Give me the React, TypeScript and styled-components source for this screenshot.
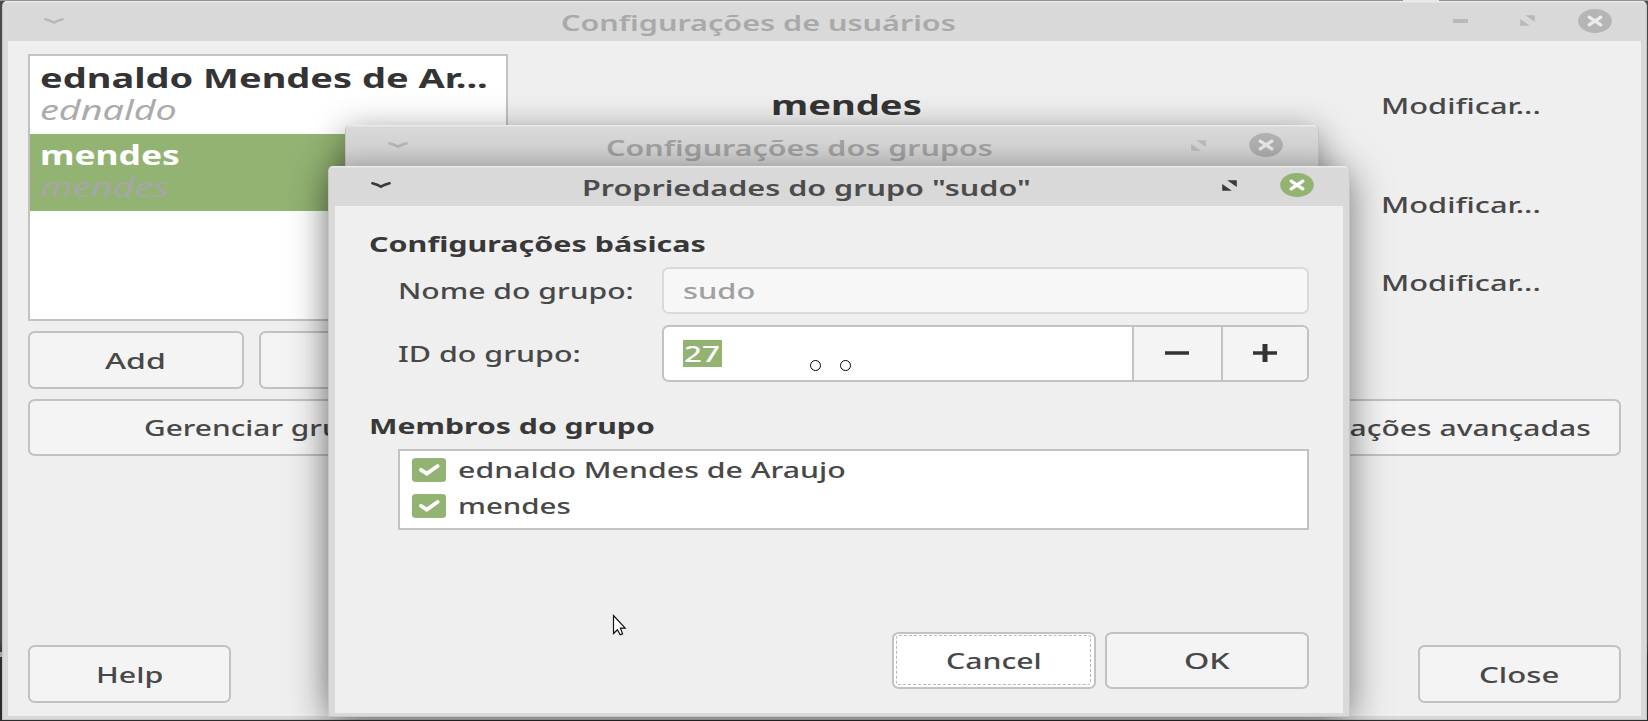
import React, { useLayoutEffect, useRef, useState } from 'react';
import styled, { createGlobalStyle, css } from 'styled-components';

const green = '#92b372';
const line = '#c2c2c2';

const Global = createGlobalStyle`
  * { box-sizing: border-box; }
  html, body { margin: 0; padding: 0; overflow: hidden; }
  body { font-family: "Noto Sans", "Open Sans", sans-serif; color: #484848; }
`;

/* ---------- text fitted to a given width ---------- */

type Look = { $size?: number; $weight?: number; $italic?: boolean; $color?: string; $lh?: number };

const TextBox = styled.span<Look>`
  display: block;
  flex: none;
  white-space: nowrap;
  text-align: left;
  font-size: ${p => p.$size ?? 21.3}px;
  font-weight: ${p => p.$weight ?? 500};
  font-style: ${p => (p.$italic ? 'italic' : 'normal')};
  line-height: ${p => p.$lh ?? 30}px;
  color: ${p => p.$color ?? 'inherit'};
`;
const TextInk = styled.span`
  display: inline-block;
  vertical-align: top;
  margin-left: -1px;
  transform-origin: 0 0;
`;

function Label({ w, children, ...look }: Look & { w: number; children: string }) {
  const ref = useRef<HTMLSpanElement>(null);
  const [k, setK] = useState(1);
  useLayoutEffect(() => {
    const el = ref.current;
    if (!el) return;
    el.style.transform = 'none';
    const next = (w + 1.8) / el.getBoundingClientRect().width;
    el.style.transform = `scaleX(${next})`;
    setK(next);
  }, [w, children]);
  return (
    <TextBox {...look} style={{ width: w }}>
      <TextInk ref={ref} style={{ transform: `scaleX(${k})` }}>{children}</TextInk>
    </TextBox>
  );
}

/* ---------- windows ---------- */

const Desktop = styled.div`
  position: relative;
  width: 1648px;
  height: 721px;
  overflow: hidden;
  background: linear-gradient(#939393 0 1px, #4a4a4a 1px 640px, #2c2c2c 660px);
`;
const PanelGlint = styled.i`
  position: absolute;
  left: 1403px;
  top: 0;
  width: 36px;
  height: 1px;
  background: #e8e8e8;
`;
const EdgeGlint = styled.i`
  position: absolute;
  left: 0;
  top: 652px;
  width: 2px;
  height: 5px;
  background: #a5a5a5;
`;

const Frame = styled.section<{ $x: number; $y: number; $w: number; $h: number; $shadow?: string }>`
  position: absolute;
  left: ${p => p.$x}px;
  top: ${p => p.$y}px;
  width: ${p => p.$w}px;
  height: ${p => p.$h}px;
  display: flex;
  flex-direction: column;
  border: solid #c6c6c6;
  border-width: 0 1px 1px;
  border-radius: 5px 5px 0 0;
  background: #d9d9d9;
  box-shadow: inset 0 2px 0 -0.5px #ebebeb${p => (p.$shadow ? `, ${p.$shadow}` : '')};
`;
const TitleBar = styled.header<{ $h: number; $left: number; $right: number }>`
  flex: none;
  height: ${p => p.$h}px;
  padding: 0 ${p => p.$right}px 1px ${p => p.$left}px;
  display: flex;
  align-items: center;
  justify-content: space-between;
`;
const TitleText = styled.h1`
  margin: 0;
  padding-top: 5px;
`;
const Controls = styled.div`
  display: flex;
  align-items: center;
`;

const MenuArrow = ({ color }: { color: string }) => (
  <svg width="20" height="8" viewBox="0 0 20 8">
    <path d="M1.4 2.2 Q6.5 3.5 9.9 5.7 Q13.4 3.5 18.6 2.2" fill="none" stroke={color} strokeWidth="2.6" strokeLinecap="round" />
  </svg>
);
const Minimize = styled.i`
  width: 15px;
  height: 4px;
  margin-right: 52.5px;
  background: #b9b9b9;
`;
const MaximizeIcon = styled.svg`
  margin-right: 43px;
`;
const Maximize = ({ color }: { color: string }) => (
  <MaximizeIcon width="15" height="11" viewBox="0 0 15 11">
    <path d="M5.2 0.3H14.8V6.9ZM0.2 3.9V10.7H9.8Z" fill={color} />
  </MaximizeIcon>
);
const CloseDot = ({ color, cross }: { color: string; cross: string }) => (
  <svg width="34" height="24" viewBox="0 0 34 24">
    <ellipse cx="17" cy="12" rx="16.8" ry="11.9" fill={color} />
    <path d="M11.2 8.2L22.8 15.8M22.8 8.2L11.2 15.8" stroke={cross} strokeWidth="3.3" strokeLinecap="round" />
  </svg>
);

/* ---------- shared controls ---------- */

const Button = styled.button<{ $w: number; $focus?: boolean }>`
  position: relative;
  flex: none;
  width: ${p => p.$w}px;
  height: 57.4px;
  padding: 1.5px 0 0;
  display: flex;
  align-items: center;
  justify-content: center;
  border: 2px solid ${line};
  border-radius: 7px / 6px;
  background: ${p => (p.$focus ? '#fff' : '#f4f4f4')};
  font: inherit;
  color: inherit;
  ${p => p.$focus && css`
    &::after {
      content: '';
      position: absolute;
      inset: 1.5px 2.5px;
      border: 1px dashed #b8b8b8;
      border-radius: 3px;
    }
  `}
`;

/* ---------- user settings window ---------- */

const MainBody = styled.main`
  flex: 1;
  margin: 0 5px 3px;
  padding: 13px 19.5px 13px 20px;
  display: flex;
  flex-direction: column;
  background: #efefef;
`;
const MainTop = styled.div`
  display: flex;
  height: 266.5px;
`;
const UserList = styled.div`
  flex: none;
  width: 479.5px;
  border: 2px solid ${line};
  background: #fff;
`;
const UserRow = styled.div<{ $selected?: boolean }>`
  height: 77.5px;
  padding: 4.5px 0 0 11px;
  background: ${p => (p.$selected ? green : 'transparent')};
`;
const Profile = styled.div`
  flex: 1;
  padding: 33px 81px 0 264px;
  display: flex;
  justify-content: space-between;
`;
const ModifyColumn = styled.div`
  display: flex;
  flex-direction: column;
  padding-top: 3.8px;
`;
const Spacer = styled.div<{ $h: number }>`
  flex: none;
  height: ${p => p.$h}px;
`;
const ButtonRow = styled.div<{ $spread?: boolean }>`
  display: flex;
  gap: 15px;
  justify-content: ${p => (p.$spread ? 'space-between' : 'flex-start')};
`;

/* ---------- group properties window ---------- */

const DialogBody = styled.main`
  flex: 1;
  margin: 0 5.5px 3.5px 6px;
  padding: 23px 34px 23.6px 34.5px;
  display: flex;
  flex-direction: column;
  background: #efefef;
`;
const Field = styled.div<{ $drop?: number }>`
  display: flex;
  align-items: center;
  justify-content: space-between;
  padding-left: 29px;
  & > span { padding-top: ${p => p.$drop ?? 0}px; }
`;
const Entry = styled.div<{ $disabled?: boolean }>`
  width: 647px;
  height: ${p => (p.$disabled ? 47 : 57)}px;
  padding-left: ${p => (p.$disabled ? 19.5 : 18.6)}px;
  display: flex;
  align-items: center;
  border: 2px solid ${p => (p.$disabled ? '#dadada' : line)};
  border-radius: 7px / 6px;
  background: ${p => (p.$disabled ? '#f7f7f7' : '#fff')};
  overflow: hidden;
`;
const Selection = styled.span`
  height: 27px;
  width: 39px;
  padding-left: 2.5px;
  background: ${green};
`;
const Steppers = styled.div`
  display: flex;
  align-self: stretch;
  margin-left: auto;
`;
const Stepper = styled.button<{ $w: number }>`
  width: ${p => p.$w}px;
  padding: 0 1px 0 0;
  display: flex;
  align-items: center;
  justify-content: center;
  border: 0;
  border-left: 2px solid ${line};
  background: #f4f4f4;
`;
const Members = styled.div`
  margin-left: 28.5px;
  height: 81.5px;
  padding: 0 0 0 12px;
  border: 2px solid ${line};
  background: #fff;
`;
const Member = styled.div`
  height: 37.2px;
  display: flex;
  align-items: center;
  gap: 12.8px;
  &:first-child { padding-top: 1.4px; }
`;
const Check = () => (
  <svg width="34" height="24" viewBox="0 0 34 24">
    <rect width="34" height="24" rx="4" ry="3" fill={green} />
    <path d="M9 11.8L14.8 15.6L25.6 8" fill="none" stroke="#fff" strokeWidth="3.8" strokeLinecap="round" />
  </svg>
);
const Actions = styled.div`
  margin-top: auto;
  display: flex;
  justify-content: flex-end;
  gap: 9.5px;
`;

const Ring = styled.i<{ $x: number }>`
  position: absolute;
  left: ${p => p.$x}px;
  top: 360px;
  width: 11px;
  height: 11px;
  border: 1px solid #000;
  border-radius: 50%;
  background: #fff;
`;
const Pointer = styled.svg`
  position: absolute;
  left: 612px;
  top: 614px;
`;

export default function App() {
  return (
    <>
      <Global />
      <Desktop>
        <PanelGlint />
        <EdgeGlint />

        <Frame $x={2} $y={1} $w={1644.5} $h={718.5}>
          <TitleBar $h={40} $left={41} $right={33.5}>
            <MenuArrow color="#b9b9b9" />
            <TitleText><Label w={393} $weight={600} $color="#a9a9a9" $size={21.8}>Configurações de usuários</Label></TitleText>
            <Controls>
              <Minimize />
              <Maximize color="#b9b9b9" />
              <CloseDot color="#b5b5b5" cross="#ececec" />
            </Controls>
          </TitleBar>
          <MainBody>
            <MainTop>
              <UserList>
                <UserRow>
                  <Label w={446} $weight={700} $size={27.3} $lh={33} $color="#343434">ednaldo Mendes de Ar...</Label>
                  <Label w={135} $italic $weight={400} $size={27.5} $lh={31} $color="#ababab">ednaldo</Label>
                </UserRow>
                <UserRow $selected>
                  <Label w={138} $weight={700} $size={27.3} $lh={33} $color="#fff">mendes</Label>
                  <Label w={127} $italic $weight={400} $size={27.5} $lh={31} $color="#a6a6a6">mendes</Label>
                </UserRow>
              </UserList>
              <Profile>
                <Label w={149} $weight={700} $size={27.5} $lh={36} $color="#343434">mendes</Label>
                <ModifyColumn>
                  <Label w={158}>Modificar...</Label>
                  <Spacer $h={69.5} />
                  <Label w={158}>Modificar...</Label>
                  <Spacer $h={47.7} />
                  <Label w={158}>Modificar...</Label>
                </ModifyColumn>
              </Profile>
            </MainTop>
            <Spacer $h={10.8} />
            <ButtonRow>
              <Button $w={215.5}><Label w={59}>Add</Label></Button>
              <Button $w={249} />
            </ButtonRow>
            <Spacer $h={10} />
            <ButtonRow $spread>
              <Button $w={479.5}><Label w={246}>Gerenciar grupos</Label></Button>
              <Button $w={427}><Label w={364}>Configurações avançadas</Label></Button>
            </ButtonRow>
            <Spacer $h={189.3} />
            <ButtonRow $spread>
              <Button $w={203}><Label w={65.5}>Help</Label></Button>
              <Button $w={203.5}><Label w={78.5}>Close</Label></Button>
            </ButtonRow>
          </MainBody>
        </Frame>

        <Frame $x={345} $y={125} $w={973.5} $h={566} $shadow="0 6px 34px rgba(0,0,0,.42)">
          <TitleBar $h={41} $left={41.5} $right={34.5}>
            <MenuArrow color="#b9b9b9" />
            <TitleText><Label w={385} $weight={600} $color="#a5a5a5" $size={21.8}>Configurações dos grupos</Label></TitleText>
            <Controls>
              <Maximize color="#bdbdbd" />
              <CloseDot color="#b3b3b3" cross="#ececec" />
            </Controls>
          </TitleBar>
        </Frame>

        <Frame $x={328} $y={165.5} $w={1021.5} $h={551.5} $shadow="0 6px 38px rgba(0,0,0,.5)">
          <TitleBar $h={40.5} $left={42} $right={34.5}>
            <MenuArrow color="#3a3a3a" />
            <TitleText><Label w={447} $weight={600} $color="#4c4c4c" $size={21.8}>Propriedades do grupo "sudo"</Label></TitleText>
            <Controls>
              <Maximize color="#3a3a3a" />
              <CloseDot color={green} cross="#fff" />
            </Controls>
          </TitleBar>
          <DialogBody>
            <Label w={335} $weight={700} $color="#383838">Configurações básicas</Label>
            <Spacer $h={8} />
            <Field $drop={0.5}>
              <Label w={234}>Nome do grupo:</Label>
              <Entry $disabled><Label w={70.5} $color="#a0a0a0">sudo</Label></Entry>
            </Field>
            <Spacer $h={10.7} />
            <Field $drop={1.5}>
              <Label w={181}>ID do grupo:</Label>
              <Entry>
                <Selection><Label w={34} $lh={27} $color="#fff">27</Label></Selection>
                <Steppers>
                  <Stepper $w={89}>
                    <svg width="26" height="18" viewBox="0 0 26 18"><path d="M1 9H25" stroke="#333" strokeWidth="3.6" /></svg>
                  </Stepper>
                  <Stepper $w={86}>
                    <svg width="26" height="18" viewBox="0 0 26 18">
                      <path d="M1 9H25" stroke="#333" strokeWidth="3.6" />
                      <path d="M13 0V18" stroke="#333" strokeWidth="5" />
                    </svg>
                  </Stepper>
                </Steppers>
              </Entry>
            </Field>
            <Spacer $h={29.5} />
            <Label w={284} $weight={700} $color="#383838">Membros do grupo</Label>
            <Spacer $h={7.5} />
            <Members>
              <Member><Check /><Label w={386}>ednaldo Mendes de Araujo</Label></Member>
              <Member><Check /><Label w={111}>mendes</Label></Member>
            </Members>
            <Actions>
              <Button $w={203.7} $focus><Label w={94}>Cancel</Label></Button>
              <Button $w={204}><Label w={44}>OK</Label></Button>
            </Actions>
          </DialogBody>
        </Frame>

        <Ring $x={810} />
        <Ring $x={840} />
        <Pointer width="15" height="22" viewBox="0 0 15 22">
          <path d="M1.5 1.5V19.5L5.4 15.8L8.2 20.8L10.6 19.8L8.4 14.2H13.2Z" fill="#fff" stroke="#111" strokeWidth="1.2" />
        </Pointer>
      </Desktop>
    </>
  );
}
